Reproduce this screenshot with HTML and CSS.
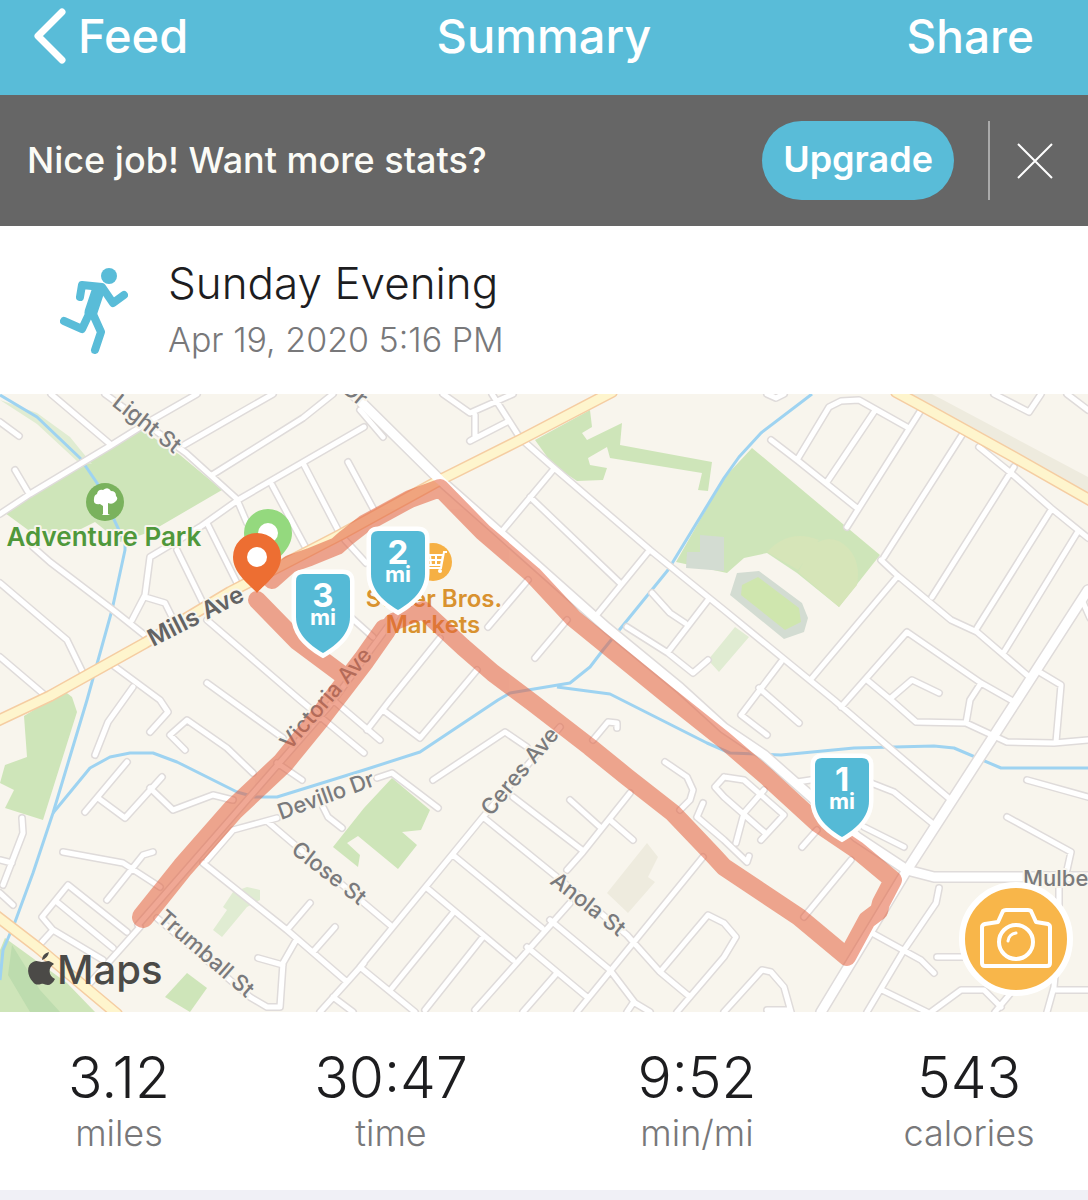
FILE: index.html
```html
<!DOCTYPE html>
<html lang="en">
<head>
    <title>Summary</title>
    <meta charset="UTF-8">
    <meta name="viewport" content="width=device-width, initial-scale=1">
    <link rel="stylesheet" href="styles.css">
</head>
<body>

    <header class="topbar">
        <a class="back" href="#feed">
            <svg class="chevron" viewBox="0 0 32 56" aria-hidden="true"><path d="M28 4 4 28l24 24"/></svg>
            Feed
        </a>
        <h1>Summary</h1>
        <a class="share" href="#share">Share</a>
    </header>

    <section class="promo">
        <p>Nice job! Want more stats?</p>
        <button type="button" class="upgrade">Upgrade</button>
        <button type="button" class="close" aria-label="Close">
            <svg viewBox="0 0 36 36" aria-hidden="true"><path d="M1 1l34 34M35 1 1 35"/></svg>
        </button>
    </section>

    <main>
        <section class="activity">
            <svg class="runner" viewBox="0 -3 68 90" aria-hidden="true">
                <circle cx="49" cy="8" r="8"/>
                <path class="limb" d="M20 29l2-12 20 2 11 16 11-8"/>
                <path class="torso" d="M38 23 31 44"/>
                <path class="limb" d="M30 44l-8 17-18-8M32 44l9 20-6 18"/>
            </svg>
            <div>
                <h2>Sunday Evening</h2>
                <p>Apr 19, 2020 5:16 PM</p>
            </div>
        </section>

        <section class="map">
            <svg class="map-canvas" viewBox="0 394 1088 618" role="img" aria-label="Route map">
                <defs>
                    <path id="streets" d="M0 422 19 436M51 394 110 444M0 514 30 494 110 446 150 421 197 394M15 470 28 492M105 394 186 453 238 500M184 445 273 394M212 475 303 418 333 394M132 620 145 595 150 557 200 527 238 500 364 427M145 597 165 603 172 617M238 502 247 523M272 485 307 550M303 463 338 530M348 462 375 512M207 523 237 583M177 550 203 603M33 547 50 562 113 610 147 637M0 583 67 640 83 673M0 657 47 697M110 663 160 700 168 712 150 732M133 687 108 722 95 755M207 620 300 700 364 753M207 683 283 738M333 700 380 740M345 612 373 637M345 540 366 563
                        M360 410 383 437M443 394 470 413 513 394M475 415 475 438 470 441 507 422M492 394 520 438 553 467 650 550 724 610 834 700 884 743 951 800M553 470 503 530M530 497 620 583M648 552 595 617M503 536 593 617M528 580 488 627M567 620 535 658M440 638 390 700 367 730M477 670 420 738 383 710M652 593 670 613 685 623M708 600 668 652M627 627 668 653 693 673 708 660
                        M771 440 797 460 857 508M797 460 829 407 841 401 859 400 907 427M874 412 827 482M921 410 847 527M962 435 884 557M1014 467 932 597M979 447 1011 473 1051 508 1088 538M1051 510 977 628M1077 533 1004 652M881 560 897 575 951 620 977 632 1027 675M897 577 812 678M1082 600 1090 618M1041 673 1061 685 1056 742M781 662 741 715 767 735M759 688 799 723M841 707 907 632 981 683 1011 700M867 680 891 700 916 722 966 723 1007 742 1054 743 1088 740M891 698 912 680 939 693M981 683 970 700 966 723M994 394 1029 412 1041 394M1067 394 1088 410M767 394 776 398 784 394
                        M1027 780 1088 797M1007 817 1071 852 1067 870M1059 887 1059 930 1054 987 1047 1012M797 782 830 777 871 783 894 792 932 823M864 827 904 847M939 888 936 903 904 950 867 1012M872 933 921 960 934 973M882 990 927 1012M931 1012 961 990 984 990 1001 1007M1010 994 995 1012M1054 990 1088 990M937 957 964 957M851 860 804 917M817 830 802 847M724 777 744 780 784 815 761 840M724 797 764 832M764 790 744 813 736 843M697 817 724 840 747 862 749 856M703 803 697 817M724 923 736 937 724 957M724 1012 762 970 771 972 784 987 791 1012M767 1010 787 1010
                        M433 780 505 732 527 747M377 778 392 773 438 808M513 797 582 850M570 800 600 827M610 820 633 840M630 793 583 852 567 870M570 903 475 1010M483 817 557 877 627 935 660 972 690 997M560 727 483 817 360 967M453 855 542 928M427 888 513 960M550 920 610 970 635 1003 650 1012M527 947 587 997M703 857 577 1012M453 913 392 988M483 937 425 1010M360 967 415 1012M557 973 523 1012M633 1003 627 1012M660 972 708 915 724 923M724 957 677 1012M593 740 608 722 617 723 617 728M665 762 687 777 693 790 690 800 680 810M724 777 715 787 724 797M295 845 390 925
                        M127 762 85 812M98 798 125 818 162 777M150 788 173 810 213 795 233 800M185 750 170 735 187 720 227 748 253 773M277 763 302 780M63 852 123 863 160 887M153 852 143 855 107 900M22 818 23 833 3 885M0 860 12 863M0 893 13 905M42 942 53 930M53 930 42 917 68 885 127 932M57 902 113 948M53 930 103 960M140 927 90 983M277 818 233 830 207 860M203 863 287 930 347 982 364 963M347 982 320 1012M310 903 287 930M335 927 313 952M295 942 283 963 280 1007 267 1007 250 997 157 918M258 958 283 965M333 997 353 1012M268 822 295 845M323 807 328 817 342 828M138 925 330 705 400 610"/>
                    <path id="avenues" d="M353 394 440 480 500 533 607 628 680 688 724 728 764 755 857 837 907 870M1088 590 1017 700 907 870 821 1012M907 870 934 877 1088 877"/>
                    <path id="highways" d="M-5 722 50 696 145 643 230 592 340 535 440 480 520 440 612 392M896 392 920 405 1014 457 1095 503M-6 914 37 947 117 1014"/>
                    <path id="shield" d="M-20-39h40q7 0 7 7v36C27 20 14 32 0 40-14 32-27 20-27 4v-36q0-7 7-7z"/>
                    <path id="pin" d="M0-24a24 24 0 0 1 24 24C24 16 9 26 0 36-9 26-24 16-24 0A24 24 0 0 1 0-24z"/>
                </defs>

                <rect class="land" x="0" y="394" width="1088" height="618"/>

                <!-- parks, school grounds and buildings -->
                <g class="park">
                    <path d="M5 513 142 430 180 455 222 490 150 532 120 542 95 522 75 532 35 535z"/>
                    <path d="M63 690 72 697 77 712 43 820 5 808 14 790 0 783 5 765 27 757 24 716 55 697z"/>
                    <path d="M187 973 207 988 190 1012 165 997z"/>
                    <path d="M5 938 67 983 95 1012H0V950z"/>
                    <path d="M392 778 430 810 421 830 402 832 417 845 398 869 358 836 347 843 360 855 358 867 333 847 364 808z"/>
                    <path d="M535 440 590 410 592 427 582 433 587 440 622 423 620 445 712 462 708 491 698 490 702 473 610 458 607 447 588 458 590 465 607 468 603 480 577 481 553 465z"/>
                    <path d="M752 448 880 555 839 607 797 573 767 553 744 558 727 573 676 562 724 478z"/>
                </g>
                <path class="park-light" d="M213 930 227 910 223 907 233 892 247 887 260 890 260 900 247 907 222 937zM735 627 749 637 719 672 708 660zM0 400 37 424 78 462 92 464 70 437 37 413z"/>
                <path class="park-dark" d="M12 945 40 990 60 1012H30L8 975z"/>
                <path class="field" d="M767 552q22-24 52-12l-21 30zM798 572l15-27q20-14 36 4 12 14 8 36l-18 22z"/>
                <path class="pavement" d="M687 552h13v-17l24 2v34l-38-3zM737 573 759 571 802 603 808 618 804 632 784 639 730 595z"/>
                <path class="pitch" d="M742 585 758 577 799 608 801 622 785 630 741 595z"/>
                <path class="plot" d="M647 843 658 857 648 877 655 882 628 913 607 893zM905 394h27l156 83v22z"/>

                <path class="water" d="M0 395 37 417 80 458 97 483 125 543 125 550 112 610 87 700 53 813 33 873 15 922 3 950 0 980"/>
                <path class="water" d="M53 813 90 768 110 757 130 753 153 753 177 762 237 792 255 797 277 797 364 770 420 752 498 700 510 693 570 683 590 667 603 650 668 570 724 478 739 457 761 433 812 394"/>
                <path class="water" d="M557 687 610 694 707 743 730 753 781 755 854 748 934 746 954 748 1001 768 1088 768"/>

                <use class="street-edge" href="#streets"/>
                <use class="avenue-edge" href="#avenues"/>
                <use class="street" href="#streets"/>
                <use class="highway-edge" href="#highways"/>
                <use class="highway" href="#highways"/>
                <use class="avenue" href="#avenues"/>

                <g class="road-label">
                    <text transform="translate(111 405) rotate(38)">Light St</text>
                    <text transform="translate(341 391) rotate(40)">Dr</text>
                    <text transform="translate(290 751) rotate(-49)">Victoria Ave</text>
                    <text transform="translate(281 820) rotate(-20)">Devillo Dr</text>
                    <text transform="translate(290 852) rotate(38)">Close St</text>
                    <text transform="translate(156 920) rotate(41)">Trumball St</text>
                    <text transform="translate(491 817) rotate(-50)">Ceres Ave</text>
                    <text transform="translate(549 883) rotate(38)">Anola St</text>
                    <text x="1023" y="886">Mulbe</text>
                    <text class="major" transform="translate(153 647) rotate(-27)">Mills Ave</text>
                </g>

                <!-- places -->
                <g transform="translate(105 502)">
                    <circle class="tree-disc" r="19"/>
                    <path class="tree" d="M-2 12v-8l-3-2q-7 1-6-5 0-4 3-5 1-5 6-4 5-4 8 1 5 0 5 5 3 3-1 6-3 3-7 1l0 11 2 1h-8z"/>
                </g>
                <text class="park-name" x="104" y="546">Adventure Park</text>
                <g transform="translate(433 562)">
                    <circle class="shop-disc" r="19"/>
                    <path class="cart" d="M-9-7H10L8 3H-6M14-10h-3L8 6H-5M-3-7l1 10M3-7V3M-8-2H9"/>
                    <circle class="dot" cx="7" cy="9" r="2"/>
                </g>
                <text class="shop-name" x="434" y="607">Stater Bros.</text>
                <text class="shop-name" x="433" y="633">Markets</text>

                <g class="route">
                    <path d="M272 580 290 564 310 557 337 546 346 538 364 524 410 499 440 488 483 532 533 575 573 618 670 697 724 740 767 777 817 823 857 850 893 880 881 903 879 911 867 920 847 957 799 917 724 867 713 855 673 813 627 777 590 747 533 703 493 673 463 647 423 610 393 622 364 660"/>
                    <path d="M257 600 297 641 340 673"/>
                    <path class="doubled" d="M385 630 364 660 318 720 283 763 233 810 183 867 143 917"/>
                </g>

                <use class="pin-start" href="#pin" x="268" y="533"/>
                <circle class="dot" cx="268" cy="533" r="10"/>
                <use class="pin-end" href="#pin" x="257" y="557"/>
                <circle class="dot" cx="257" cy="557" r="10"/>

                <g class="mile" transform="translate(323 613)">
                    <use href="#shield"/>
                    <text class="mile-number" y="-6">3</text>
                    <text class="mile-unit" y="12">mi</text>
                </g>
                <g class="mile" transform="translate(398 570)">
                    <use href="#shield"/>
                    <text class="mile-number" y="-6">2</text>
                    <text class="mile-unit" y="12">mi</text>
                </g>
                <g class="mile" transform="translate(842 797)">
                    <use href="#shield"/>
                    <text class="mile-number" y="-6">1</text>
                    <text class="mile-unit" y="12">mi</text>
                </g>

                <g class="credit">
                    <path d="M49 952q-1 6-7 8 0-6 7-8zM42 962c4 0 6-2 9 0q2 1 3 2c-6 3-6 12 1 15-2 4-5 6-7 6-3 0-4-2-7-1-3 1-6 1-8-2-6-6-7-17 0-20 4-2 6 0 9 0z"/>
                    <text x="57" y="984">Maps</text>
                </g>
            </svg>

            <button type="button" class="camera" aria-label="Add photo">
                <svg viewBox="0 0 72 62" aria-hidden="true">
                    <path d="M5 16l13-2 5-11q1-1 3-1h22q2 0 3 1l5 11 12 2q2 1 2 3v36q0 3-3 3H5q-3 0-3-3V19q0-2 3-3z"/>
                    <circle cx="36" cy="34" r="17"/>
                    <path class="glint" d="M28 33q1-7 8-8"/>
                </svg>
            </button>
        </section>

        <dl class="stats">
            <div><dd>3.12</dd><dt>miles</dt></div>
            <div><dd>30:47</dd><dt>time</dt></div>
            <div><dd>9:52</dd><dt>min/mi</dt></div>
            <div><dd>543</dd><dt>calories</dt></div>
        </dl>
    </main>

</body>
</html>
```

FILE: styles.css
```css
* {
    box-sizing: border-box;
}

body {
    margin: 0;
    background: #f0f0f6;
    color: #1d1d1f;
    font-family: Inter, "Liberation Sans", sans-serif;
}

h1, h2, p, dl, dd {
    margin: 0;
    font-weight: 400;
}

button {
    border: 0;
    padding: 0;
    font-family: inherit;
    cursor: pointer;
}

svg {
    display: block;
}

/* top bar */
.topbar {
    display: grid;
    grid-template-columns: 1fr auto 1fr;
    align-items: center;
    padding: 8px 34px 31px;
    background: #59bcd8;
    color: #fff;
}

.topbar h1, .topbar a {
    font-size: 47px;
    font-weight: 500;
    line-height: 56px;
    color: #fff;
    text-decoration: none;
}

.back {
    display: flex;
    align-items: center;
    gap: 12px;
}

.topbar .share {
    justify-self: end;
    margin-right: 20px;
    font-size: 46px;
}

.chevron {
    width: 32px;
    height: 56px;
    fill: none;
    stroke: #fff;
    stroke-width: 7;
    stroke-linecap: round;
    stroke-linejoin: round;
}

/* upgrade banner */
.promo {
    display: flex;
    align-items: center;
    padding: 26px 35px 26px 27px;
    background: #666;
}

.promo p {
    flex: 1;
    padding-bottom: 2px;
    color: #fbfbf6;
    font-size: 36px;
    font-weight: 500;
}

.upgrade {
    height: 79px;
    padding: 0 21px 4px;
    border-radius: 40px;
    background: #59bcd8;
    color: #fff;
    font-size: 36px;
    font-weight: 600;
}

.close {
    height: 79px;
    margin-left: 34px;
    padding-left: 27px;
    border-left: 2px solid #aaa;
    background: none;
}

.close svg {
    width: 36px;
    height: 36px;
    fill: none;
    stroke: #fff;
    stroke-width: 2;
}

/* activity title */
.activity {
    display: flex;
    align-items: center;
    gap: 40px;
    padding: 29px 60px;
    background: #fff;
}

.activity h2 {
    font-size: 44px;
    font-weight: 350;
    line-height: 56px;
}

.activity p {
    padding-top: 4px;
    color: #78787a;
    font-size: 34px;
    font-weight: 300;
    line-height: 50px;
}

.runner {
    width: 68px;
    height: 90px;
    fill: #59bcd8;
}

.limb, .torso {
    fill: none;
    stroke: #59bcd8;
    stroke-width: 8;
    stroke-linecap: round;
    stroke-linejoin: round;
}

.torso {
    stroke-width: 13;
}

/* map */
.map {
    position: relative;
}

.map-canvas {
    width: 100%;
    height: auto;
}

.land { fill: #f8f5ed; }
.park { fill: #cee5b9; }
.park-light { fill: #e0ecd2; }
.park-dark { fill: #bddcae; }
.field { fill: #d6e5b8; }
.pavement { fill: #d3dcd2; }
.pitch { fill: #cfe6ae; }
.plot { fill: #eeebde; }

.water {
    fill: none;
    stroke: #9ed3f1;
    stroke-width: 3;
    stroke-linejoin: round;
}

.street-edge, .street, .avenue-edge, .avenue, .highway-edge, .highway {
    fill: none;
    stroke: #fff;
    stroke-linecap: round;
    stroke-linejoin: round;
}

.street-edge { stroke: #dfdbda; stroke-width: 8; }
.street { stroke-width: 5; }
.avenue-edge { stroke: #dfdbda; stroke-width: 12; }
.avenue { stroke-width: 9; }
.highway-edge { stroke: #f5cda2; stroke-width: 12; }
.highway { stroke: #fef5cd; stroke-width: 9; }

.map-canvas text {
    paint-order: stroke;
    stroke: #f8f5ed;
    stroke-width: 4;
    stroke-linejoin: round;
}

.road-label {
    fill: #7a7a7c;
    font-size: 22px;
    font-weight: 500;
}

.road-label .major {
    fill: #636363;
    font-size: 24px;
    font-weight: 600;
}

.park-name, .shop-name {
    fill: #4f983b;
    font-size: 26px;
    font-weight: 600;
    text-anchor: middle;
}

.shop-name {
    fill: #d9922f;
    font-size: 24px;
}

.tree-disc { fill: #7ab25d; }
.shop-disc { fill: #f6b044; }
.tree, .dot { fill: #fff; }

.cart {
    fill: none;
    stroke: #fff;
    stroke-width: 2;
}

.route {
    fill: none;
    stroke: #e4603e;
    stroke-width: 18;
    stroke-linecap: round;
    stroke-linejoin: round;
    opacity: .55;
}

.doubled {
    stroke-width: 22;
}

.pin-start { fill: #94d97e; }
.pin-end { fill: #ed6e32; }

.mile use {
    fill: #55bad6;
    stroke: #fff;
    stroke-width: 9;
    paint-order: stroke;
}

.mile text {
    fill: #fff;
    stroke: none;
    font-size: 33px;
    font-weight: 700;
    text-anchor: middle;
}

.mile .mile-unit {
    font-size: 22px;
}

.credit {
    fill: #4b4a47;
}

.credit text {
    stroke: none;
    font-size: 40px;
    font-weight: 500;
}

.camera {
    position: absolute;
    right: 15px;
    bottom: 16px;
    display: grid;
    place-items: center;
    width: 114px;
    height: 114px;
    border: 6px solid #fff;
    border-radius: 50%;
    background: #f8b64a;
}

.camera svg {
    width: 72px;
    height: 62px;
    fill: none;
    stroke: #fff;
    stroke-width: 4;
    stroke-linejoin: round;
}

.camera .glint {
    stroke-width: 3;
    stroke-linecap: round;
}

/* totals */
.stats {
    display: grid;
    grid-template-columns: 7fr 9fr 9fr 7fr;
    padding: 32px 0;
    background: #fff;
    text-align: center;
}

.stats dd {
    font-size: 57px;
    font-weight: 350;
    line-height: 68px;
}

.stats dt {
    color: #78787a;
    font-size: 36px;
    font-weight: 300;
    line-height: 42px;
    padding-bottom: 4px;
}
```
